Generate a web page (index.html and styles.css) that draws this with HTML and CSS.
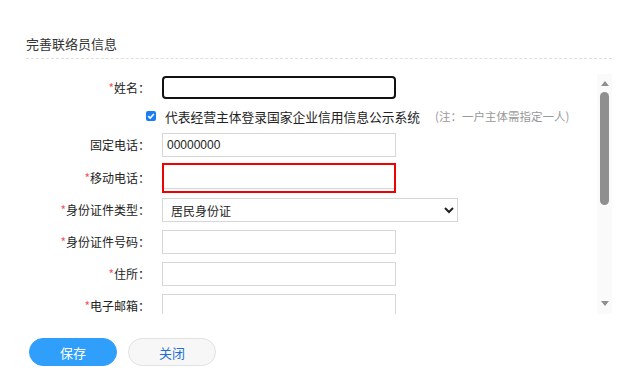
FILE: index.html
```html
<!DOCTYPE html>
<html lang="zh-CN">
<head>
  <meta charset="UTF-8">
  <meta name="viewport" content="width=device-width, initial-scale=1.0">
  <title>完善联络员信息</title>
  <link rel="stylesheet" href="styles.css">
</head>
<body>
  <div class="page">
    <h2 class="title">完善联络员信息</h2>
    <div class="scroll-box">
      <form class="form" id="contactForm">
        <div class="row row-name">
          <label class="label" for="name"><span class="star">*</span>姓名：</label>
          <input type="text" id="name" class="input input-focus">
        </div>
        <div class="row row-check">
          <span class="check">
            <svg width="10" height="10" viewBox="0 0 10 10"><path d="M2.2 5.2 L4.2 7.1 L7.9 3" fill="none" stroke="#fff" stroke-width="1.6"/></svg>
          </span>
          <span class="check-text">代表经营主体登录国家企业信用信息公示系统</span>
          <span class="note">(注：一户主体需指定一人)</span>
        </div>
        <div class="row">
          <label class="label" for="phone">固定电话：</label>
          <input type="text" id="phone" class="input" value="00000000">
        </div>
        <div class="row row-mobile">
          <label class="label" for="mobile"><span class="star">*</span>移动电话：</label>
          <input type="text" id="mobile" class="input input-error">
        </div>
        <div class="row">
          <label class="label" for="idType"><span class="star">*</span>身份证件类型：</label>
          <select id="idType" class="select">
            <option>居民身份证</option>
            <option>护照</option>
          </select>
        </div>
        <div class="row">
          <label class="label" for="idNo"><span class="star">*</span>身份证件号码：</label>
          <input type="text" id="idNo" class="input">
        </div>
        <div class="row">
          <label class="label" for="addr"><span class="star">*</span>住所：</label>
          <input type="text" id="addr" class="input">
        </div>
        <div class="row">
          <label class="label" for="email"><span class="star">*</span>电子邮箱：</label>
          <input type="text" id="email" class="input">
        </div>
      </form>
      <div class="scrollbar">
        <span class="arrow-up"></span>
        <span class="thumb"></span>
        <span class="track-space"></span>
        <span class="arrow-down"></span>
      </div>
    </div>
    <div class="buttons">
      <button type="button" class="btn btn-primary">保存</button>
      <button type="button" class="btn btn-default">关闭</button>
    </div>
  </div>
</body>
</html>
```

FILE: styles.css
```css
body {
  margin: 0;
  background-color: #ffffff;
  font-family: "Noto Sans CJK SC", "Liberation Sans", sans-serif;
  color: #333;
}
.page {
  width: 586px;
  padding: 34px 0 0 26px;
}
.title {
  margin: 0;
  font-size: 13px;
  font-weight: normal;
  line-height: 20px;
  padding-bottom: 4px;
  border-bottom: 1px dashed #dedede;
}
.scroll-box {
  display: flex;
  height: 240px;
  margin-top: 15px;
}
.form {
  flex: 1;
  overflow: hidden;
  padding-top: 2px;
  display: flex;
  flex-direction: column;
  gap: 8px;
}
.row {
  display: flex;
  align-items: center;
  flex-shrink: 0;
}
.label {
  width: 124px;
  margin-right: 12px;
  text-align: right;
  font-size: 12px;
  line-height: 16px;
  color: #222;
  white-space: nowrap;
}
.star {
  color: #f5535f;
}
.input {
  box-sizing: border-box;
  width: 234px;
  height: 24px;
  margin: 0;
  padding: 0 4px;
  border: 1px solid #d6d6d6;
  border-radius: 0;
  font-family: "Liberation Sans", sans-serif;
  font-size: 12px;
  color: #222;
  outline: none;
}
.input-focus {
  height: 23px;
  border: 2px solid #111;
  border-radius: 4px;
}
.input-error {
  height: 30px;
  border: 2px solid #f00000;
  box-shadow: inset 0 -2px 0 #fff, inset 0 -3px 0 #d6d6d6;
}
.row-check {
  padding-left: 120px;
  height: 18px;
}
.row-mobile {
  margin-top: -2px;
  margin-bottom: -3px;
}
.check {
  width: 10px;
  height: 10px;
  border-radius: 2px;
  background-color: #1a7ef2;
  display: flex;
  margin-right: 9px;
}
.check-text {
  font-size: 12.75px;
  color: #222;
}
.note {
  margin-left: 15px;
  font-size: 11.5px;
  color: #999;
}
.select {
  box-sizing: border-box;
  width: 296px;
  height: 24px;
  margin: 0;
  padding: 0 4px;
  border: 1px solid #d6d6d6;
  border-radius: 0;
  background-color: #fff;
  font-family: "Noto Sans CJK SC", sans-serif;
  font-size: 12px;
  color: #222;
}
.scrollbar {
  width: 15px;
  background-color: #fafafa;
  display: flex;
  flex-direction: column;
  align-items: center;
}
.arrow-up {
  margin-top: 7px;
  width: 0;
  height: 0;
  border-left: 4px solid transparent;
  border-right: 4px solid transparent;
  border-bottom: 5px solid #8f8f8f;
}
.thumb {
  margin-top: 6px;
  width: 9px;
  height: 113px;
  border-radius: 5px;
  background-color: #8f8f8f;
}
.track-space {
  flex: 1;
}
.arrow-down {
  margin-bottom: 8px;
  width: 0;
  height: 0;
  border-left: 4px solid transparent;
  border-right: 4px solid transparent;
  border-top: 5px solid #8f8f8f;
}
.buttons {
  display: flex;
  gap: 11px;
  margin-top: 24px;
  padding-left: 3px;
}
.btn {
  width: 88px;
  height: 28px;
  border-radius: 14px;
  font-family: "Noto Sans CJK SC", sans-serif;
  font-size: 13px;
  cursor: pointer;
}
.btn-primary {
  background-color: #2f9ffb;
  border: 1px solid #2f9ffb;
  color: #fff;
}
.btn-default {
  background-color: #f7f7f7;
  border: 1px solid #e2e2e2;
  color: #1f6fd6;
}
```
